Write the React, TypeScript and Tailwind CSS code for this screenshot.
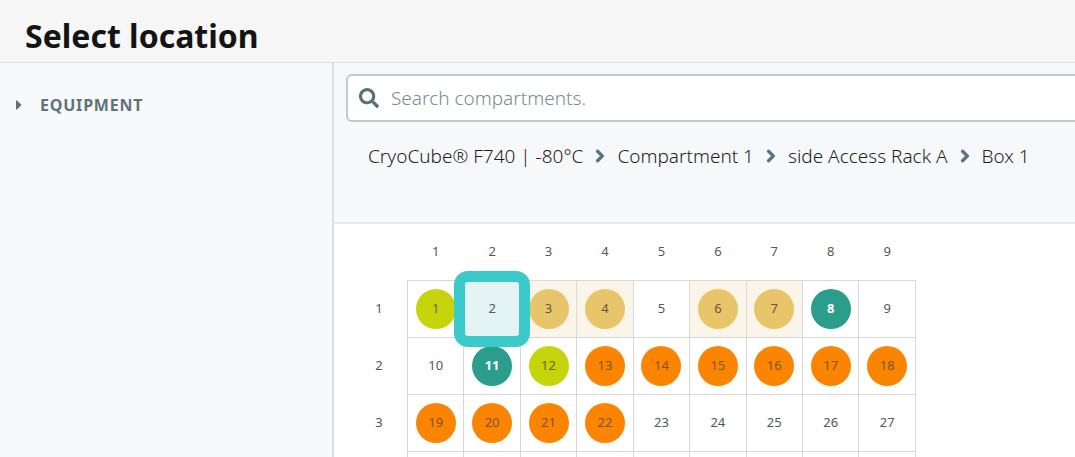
import { FaCaretRight, FaChevronRight, FaSearch } from "react-icons/fa";

type Kind = "empty" | "lime" | "sand" | "teal" | "orange" | "selected";

const columns = [1, 2, 3, 4, 5, 6, 7, 8, 9];

const rows: Kind[][] = [
  ["lime", "selected", "sand", "sand", "empty", "sand", "sand", "teal", "empty"],
  ["empty", "teal", "lime", "orange", "orange", "orange", "orange", "orange", "orange"],
  ["orange", "orange", "orange", "orange", "empty", "empty", "empty", "empty", "empty"],
];

const path = ["CryoCube® F740 | -80°C", "Compartment 1", "side Access Rack A", "Box 1"];

const discs: Record<Kind, string> = {
  empty: "text-[#50595b]",
  selected: "text-[#50595b]",
  lime: "bg-[#c5d40b] text-[#626a16]",
  sand: "bg-[#e8c46a] text-[#625840]",
  teal: "bg-[#2a9d8c] font-bold text-white",
  orange: "bg-[#fb8500] text-[#7d5322]",
};

function Slot({ kind, position }: { kind: Kind; position: number }) {
  return (
    <td className={`relative border border-[#d9d9d9] p-0 ${kind === "sand" ? "bg-[#fbf5e9]" : ""}`}>
      <button
        type="button"
        className={`mx-auto flex size-10 items-center justify-center rounded-full text-[13px] ${discs[kind]}`}
      >
        {kind !== "selected" && position}
      </button>
      {kind === "selected" && (
        <span className="pointer-events-none absolute -inset-2.5 z-10 flex items-center justify-center rounded-[14px] border-[11px] border-[#3bcaca] bg-[#e4f4f5] text-[13px] text-[#50595b]">
          {position}
        </span>
      )}
    </td>
  );
}

export default function App() {
  return (
    <div className="flex h-screen flex-col overflow-hidden bg-white font-['Noto_Sans',sans-serif]">
      <header className="border-b border-[#dcdfe1] bg-[#f6f6f6] px-[25px] pt-3 pb-0.5">
        <h1 className="text-[32px] leading-12 font-bold text-[#141414]">Select location</h1>
      </header>
      <div className="flex min-h-0 flex-1">
        <aside className="w-[334px] shrink-0 border-r-2 border-[#dcdfe1] bg-[#f7f9fb] px-3.5 pt-[30px]">
          <button type="button" className="flex items-center gap-4 text-base leading-6 font-bold tracking-wider text-[#5f7479]">
            <FaCaretRight className="size-4 w-2.5" />
            EQUIPMENT
          </button>
        </aside>
        <main className="min-w-0 flex-1">
          <div className="border-b-2 border-[#e4e9ea] bg-[#f7f8fa] pt-[11px] pb-[52px]">
            <label className="ml-3 flex h-12 items-center gap-3 rounded-l-md border-2 border-r-0 border-[#c6c8c9] bg-white pl-[11px]">
              <FaSearch className="size-5 shrink-0 text-[#55736f]" />
              <input
                type="text"
                aria-label="Search compartments"
                placeholder="Search compartments."
                className="min-w-0 flex-1 bg-transparent text-[19px] font-light outline-none placeholder:text-[#748e94]"
              />
            </label>
            <nav aria-label="Breadcrumb" className="pt-5 pl-[34px]">
              <ol className="flex items-center text-[19px] leading-7 font-light whitespace-nowrap text-[#1f1f1c]">
                {path.map((name, i) => (
                  <li key={name} className="flex items-center">
                    {i > 0 && (
                      <FaChevronRight className="mx-[11px] h-3.5 w-3 stroke-[#5b7380] stroke-[40px] text-[#5b7380]" />
                    )}
                    <a href="#">{name}</a>
                  </li>
                ))}
              </ol>
            </nav>
          </div>
          <table className="ml-[17px] w-[565px] table-fixed border-collapse text-[13px] text-[#50595b]">
            <thead>
              <tr className="h-14">
                <td />
                {columns.map((n) => (
                  <th key={n} scope="col" className="p-0 text-center font-normal">
                    {n}
                  </th>
                ))}
              </tr>
            </thead>
            <tbody>
              {rows.map((row, r) => (
                <tr key={r} className="h-[57px]">
                  <th scope="row" className="p-0 text-center font-normal">
                    {r + 1}
                  </th>
                  {row.map((kind, c) => (
                    <Slot key={c} kind={kind} position={r * 9 + c + 1} />
                  ))}
                </tr>
              ))}
              <tr className="h-[57px]">
                <td />
                {columns.map((n) => (
                  <td key={n} className="border border-[#d9d9d9]" />
                ))}
              </tr>
            </tbody>
          </table>
        </main>
      </div>
    </div>
  );
}
